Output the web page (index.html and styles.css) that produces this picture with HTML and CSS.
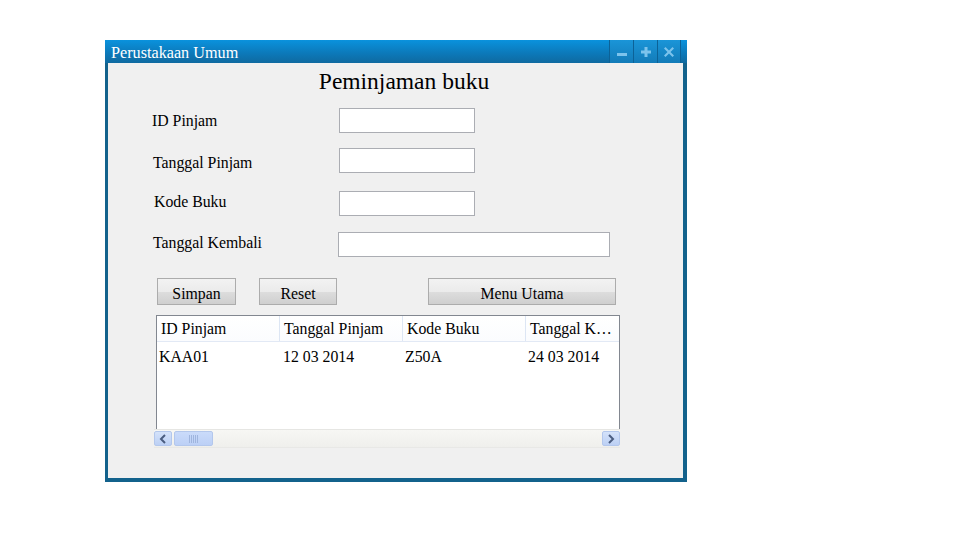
FILE: index.html
```html
<!DOCTYPE html>
<html>
<head>
<meta charset="utf-8">
<link rel="stylesheet" href="styles.css">
</head>
<body>
<div class="window">
  <div class="titlebar">
    <span class="title">Perustakaan Umum</span>
    <div class="tbtns">
      <div class="tbtn"><svg width="12" height="12" viewBox="0 0 12 12"><rect x="1" y="7" width="10" height="3" fill="#7cc3ec"/></svg></div>
      <div class="tbtn"><svg width="12" height="12" viewBox="0 0 12 12"><path d="M4.5 1h3v3.5H11v3H7.5V11h-3V7.5H1v-3h3.5z" fill="#7cc3ec"/></svg></div>
      <div class="tbtn"><svg width="12" height="12" viewBox="0 0 12 12"><path d="M2.5 1L6 4.5 9.5 1 11 2.5 7.5 6 11 9.5 9.5 11 6 7.5 2.5 11 1 9.5 4.5 6 1 2.5z" fill="#7cc3ec"/></svg></div>
    </div>
  </div>
  <div class="content">
    <h1 class="heading">Peminjaman buku</h1>
    <div class="form">
      <div class="row r1"><label class="lbl">ID Pinjam</label><div class="input"></div></div>
      <div class="row r2"><label class="lbl l2">Tanggal Pinjam</label><div class="input"></div></div>
      <div class="row r3"><label class="lbl l3">Kode Buku</label><div class="input"></div></div>
      <div class="row r4"><label class="lbl l4">Tanggal Kembali</label><div class="input wide"></div></div>
    </div>
    <div class="buttons">
      <div class="btn simpan">Simpan</div>
      <div class="btn reset">Reset</div>
      <div class="btn menu">Menu Utama</div>
    </div>
    <div class="table">
      <div class="thead">
        <div class="th">ID Pinjam</div>
        <div class="th">Tanggal Pinjam</div>
        <div class="th">Kode Buku</div>
        <div class="th last">Tanggal K…</div>
      </div>
      <div class="trow">
        <div class="td">KAA01</div>
        <div class="td">12 03 2014</div>
        <div class="td">Z50A</div>
        <div class="td last">24 03 2014</div>
      </div>
      <div class="tbody-fill"></div>
      <div class="hscroll">
        <div class="sbtn"><svg width="8" height="10" viewBox="0 0 8 10"><path d="M6 1L2 5l4 4" stroke="#4a5d80" stroke-width="2" fill="none"/></svg></div>
        <div class="thumb"><svg width="9" height="8" viewBox="0 0 9 8"><path d="M0.5 0v8M2.5 0v8M4.5 0v8M6.5 0v8M8.5 0v8" stroke="#9fb5de" stroke-width="1"/></svg></div>
        <div class="track"></div>
        <div class="sbtn"><svg width="8" height="10" viewBox="0 0 8 10"><path d="M2 1l4 4-4 4" stroke="#4a5d80" stroke-width="2" fill="none"/></svg></div>
      </div>
    </div>
  </div>
</div>
</body>
</html>
```

FILE: styles.css
```css
* { box-sizing: border-box; }
body {
  margin: 0;
  background: #ffffff;
  font-family: "Liberation Serif", "Times New Roman", serif;
  color: #000;
}
.window {
  margin: 40px 0 0 105px;
  width: 582px;
  height: 442px;
  background: #13628c;
  display: flex;
  flex-direction: column;
  padding: 0 4px 4px 3px;
}
.titlebar {
  height: 23px;
  margin: 0 -4px 0 -3px;
  background: linear-gradient(#0a92dd, #0c78b8 60%, #0f6aa0);
  display: flex;
  align-items: center;
  justify-content: space-between;
}
.title {
  color: #fff;
  font-size: 16.2px;
  padding: 3px 0 0 6px;
  line-height: 20px;
}
.tbtns {
  display: flex;
  align-self: stretch;
  margin-right: 6px;
}
.tbtn {
  width: 24px;
  display: flex;
  align-items: center;
  justify-content: center;
  background: linear-gradient(#1a95d8, #137bb8);
  border-left: 1px solid #0c6297;
}
.tbtn:last-child { border-right: 1px solid #0c6297; }
.content {
  flex: 1;
  background: #f0f0f0;
  position: relative;
}
.heading {
  margin: 3px 0 0 0;
  text-align: center;
  font-weight: normal;
  font-size: 23.5px;
  line-height: 30px;
  padding-left: 17px;
}
.form {
  padding-left: 44px;
  margin-top: 12px;
}
.row {
  display: flex;
  align-items: center;
  height: 25px;
}
.r2 { margin-top: 15px; }
.r3 { margin-top: 18px; }
.r4 { margin-top: 16px; }
.lbl {
  width: 187px;
  font-size: 15.8px;
}
.l2 { padding-left: 1px; position: relative; top: 2px; }
.l3 { padding-left: 2px; position: relative; top: -2px; }
.l4 { padding-left: 1px; width: 186px; position: relative; top: -2px; }
.input {
  width: 136px;
  height: 25px;
  background: #fff;
  border: 1px solid #abadb3;
}
.input.wide { width: 272px; }
.buttons {
  display: flex;
  margin-top: 21px;
  padding-left: 49px;
}
.btn {
  height: 27px;
  border: 1px solid #acacac;
  background: linear-gradient(#f2f2f2, #ebebeb 50%, #dddddd 51%, #cfcfcf);
  display: flex;
  align-items: center;
  justify-content: center;
  font-size: 15.8px;
  padding-top: 4px;
}
.simpan { width: 79px; }
.reset { width: 78px; margin-left: 23px; }
.menu { width: 188px; margin-left: 91px; }
.table {
  margin: 10px 0 0 48px;
  width: 464px;
  height: 133px;
  background: #fff;
  border: 1px solid #828790;
  border-bottom: none;
  display: flex;
  flex-direction: column;
  font-size: 15.8px;
}
.thead {
  display: flex;
  height: 26px;
  border-bottom: 1px solid #e2e9f5;
  background: linear-gradient(#ffffff, #fbfcfe);
}
.th {
  width: 123px;
  border-right: 1px solid #dde6f4;
  padding: 4px 0 0 4px;
  white-space: nowrap;
}
.th.last { border-right: none; flex: 1; }
.trow {
  display: flex;
  height: 28px;
  align-items: center;
}
.td {
  width: 123px;
  padding: 1px 0 0 2px;
}
.td:nth-child(2) { padding-left: 3px; }
.td:nth-child(3) { padding-left: 2px; }
.td.last { flex: 1; padding-left: 2px; }
.tbody-fill { flex: 1; }
.hscroll {
  height: 19px;
  margin: 0 -1px 0 -3px;
  display: flex;
  align-items: stretch;
  background: linear-gradient(#f7f7f4, #efefec);
  border-top: 1px solid #e6e6e3;
  border-bottom: 1px solid #e8e8e6;
  padding: 1px 0;
}
.sbtn {
  width: 18px;
  border: 1px solid #b3c7ec;
  border-radius: 2px;
  background: linear-gradient(#d4e2fa, #bcd0f4);
  display: flex;
  align-items: center;
  justify-content: center;
}
.thumb {
  width: 39px;
  margin-left: 2px;
  border: 1px solid #b3c7ec;
  border-radius: 2px;
  background: linear-gradient(#cadbfa, #bcd0f6);
  display: flex;
  align-items: center;
  justify-content: center;
}
.track { flex: 1; }
```
